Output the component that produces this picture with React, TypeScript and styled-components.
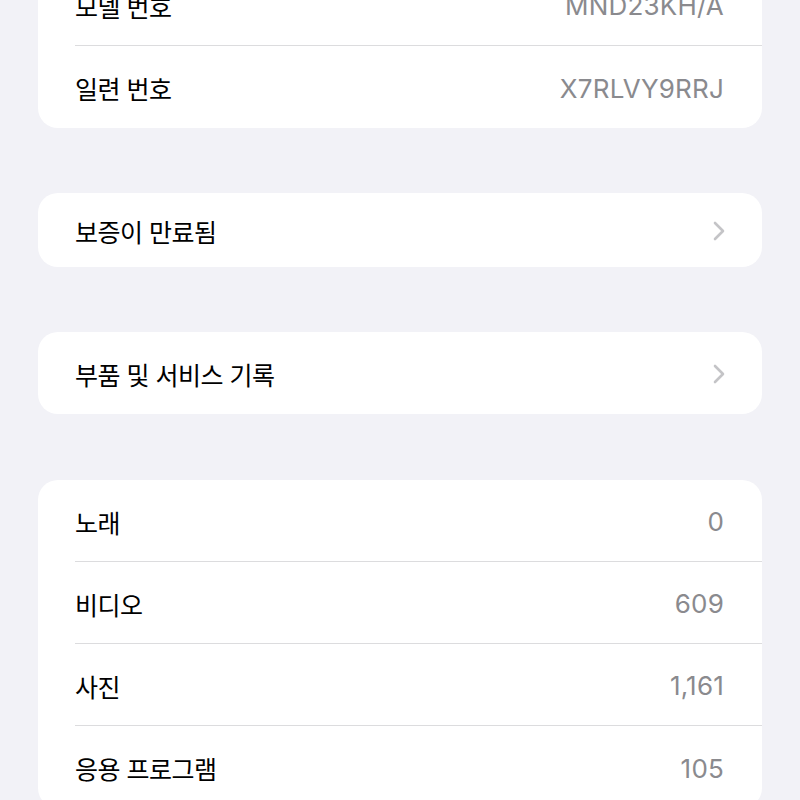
import styled, { createGlobalStyle } from "styled-components";

const GlobalStyle = createGlobalStyle`
    html, body {
        margin: 0;
        padding: 0;
        background: #f2f2f7;
        overflow: hidden;
    }
    body {
        font-family: Inter, "Noto Sans CJK KR", sans-serif;
        -webkit-font-smoothing: antialiased;
    }
`

const Page = styled.div`
    width: 800px;
    height: 800px;
    overflow: hidden;
    background: #f2f2f7;
    padding: 0 38px;
    box-sizing: border-box;
    display: flex;
    flex-direction: column;
    gap: 65px;
`

const Card = styled.div<{ $offset?: number }>`
    background: #ffffff;
    border-radius: 20px;
    overflow: hidden;
    flex-shrink: 0;
    margin-top: ${props => props.$offset ?? 0}px;
`

const Row = styled.div<{ $height?: number }>`
    display: flex;
    height: ${props => props.$height ?? 82}px;
    padding-left: 37px;
    box-sizing: border-box;
`

const RowInner = styled.div<{ $last?: boolean }>`
    flex: 1;
    display: flex;
    align-items: center;
    justify-content: space-between;
    padding-right: 38px;
    padding-top: 2px;
    border-bottom: ${props => props.$last ? "none" : "1px solid #dcdcde"};
`

const Label = styled.span`
    font-size: 25px;
    color: #000000;
    letter-spacing: -0.5px;
`

const Value = styled.span`
    font-size: 26px;
    color: #8a8a8e;
    letter-spacing: 0.2px;
`

const Chevron = () => (
    <svg width="12" height="20" viewBox="0 0 12 20" style={{ marginRight: -1 }}>
        <polyline points="2,2 10,10 2,18" fill="none" stroke="#c4c4c7" strokeWidth="2.6" strokeLinecap="round" strokeLinejoin="round" />
    </svg>
)

type InfoItem = { label: string, value: string }

const deviceInfo: InfoItem[] = [
    { label: "모델 번호", value: "MND23KH/A" },
    { label: "일련 번호", value: "X7RLVY9RRJ" },
]

const mediaInfo: InfoItem[] = [
    { label: "노래", value: "0" },
    { label: "비디오", value: "609" },
    { label: "사진", value: "1,161" },
    { label: "응용 프로그램", value: "105" },
]

function InfoCard({ items, offset }: { items: InfoItem[], offset?: number }) {
    return (
        <Card $offset={offset}>
            {items.map((item, i) => (
                <Row key={item.label}>
                    <RowInner $last={i == items.length - 1}>
                        <Label>{item.label}</Label>
                        <Value>{item.value}</Value>
                    </RowInner>
                </Row>
            ))}
        </Card>
    )
}

function LinkCard({ label, height }: { label: string, height: number }) {
    return (
        <Card>
            <Row $height={height}>
                <RowInner $last>
                    <Label>{label}</Label>
                    <Chevron />
                </RowInner>
            </Row>
        </Card>
    )
}

export default function App() {
    return (
        <>
            <GlobalStyle />
            <Page>
                <InfoCard items={deviceInfo} offset={-36} />
                <LinkCard label="보증이 만료됨" height={74} />
                <LinkCard label="부품 및 서비스 기록" height={82} />
                <InfoCard items={mediaInfo} offset={1} />
            </Page>
        </>
    )
}
